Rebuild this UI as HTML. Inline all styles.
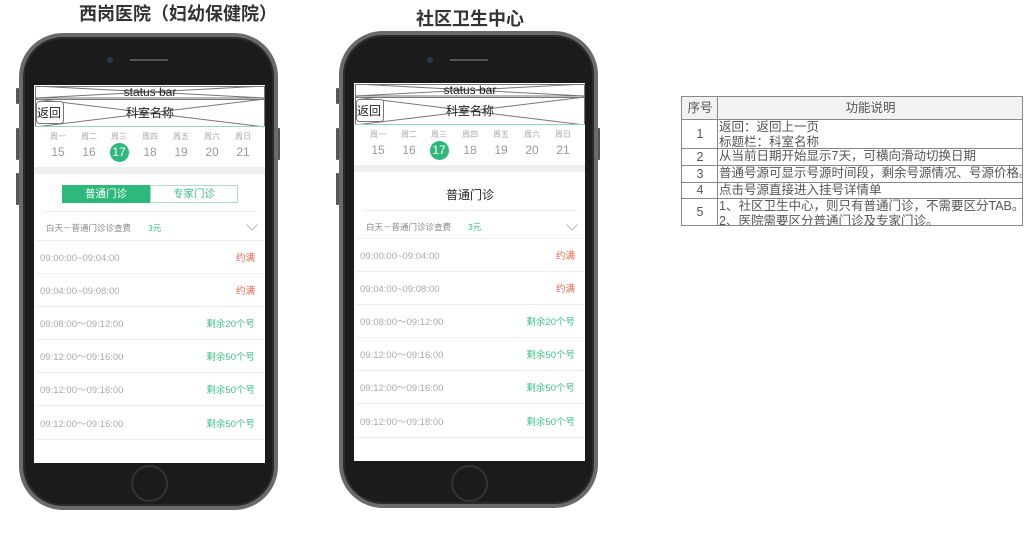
<!DOCTYPE html>
<html><head><meta charset="utf-8"><style>
*{margin:0;padding:0;box-sizing:border-box}
body{width:1035px;height:536px;background:#fff;position:relative;overflow:hidden;font-family:"Liberation Sans","Noto Sans CJK SC",sans-serif}
.a{position:absolute;line-height:1.2}
.ph{position:absolute;width:259px;height:477px}
.body{position:absolute;left:0;top:0;width:259px;height:477px;border-radius:44px;background:#1b1b1b;border:4px solid #6a6a6a;box-shadow:inset 0 0 0 2px #2a2a2a}
.btn{position:absolute;background:#555;width:3px;border-radius:1px}
.scr{position:absolute;left:15px;top:52px;width:231px;height:378px;background:#fff}
.wd{position:absolute;top:99px;font-size:8px;color:#aaa;width:30px;text-align:center;line-height:10px}
.dt{position:absolute;top:112px;font-size:12px;color:#999;width:30px;text-align:center;line-height:15px}
.row{position:absolute;left:21px;width:215px;font-size:9.5px;color:#aaa;line-height:12px;height:12px;margin-top:2px}
.row .r{position:absolute;right:0;top:0;line-height:12px}
.ln{position:absolute;left:16px;width:229px;height:1px;background:#eee}
.red{color:#f0644a}.grn{color:#3cc189}
table{position:absolute;left:681px;top:96px;border-collapse:collapse;font-size:12.5px;color:#555;width:342px;table-layout:fixed}
td{border:1px solid #888;vertical-align:top;line-height:15px;padding:0 0 0 1px;overflow:hidden;white-space:nowrap}
td.n{text-align:center;vertical-align:middle}
</style></head><body>
<div class="a" style="left:0;top:4px;width:356px;text-align:center;font-size:18px;font-weight:bold;color:#333">西岗医院（妇幼保健院）</div>
<div class="a" style="left:340px;top:9px;width:260px;text-align:center;font-size:18px;font-weight:bold;color:#333">社区卫生中心</div>

<!-- phone 1 -->
<div class="ph" style="left:19px;top:33px">
<div class="btn" style="left:-3px;top:55px;height:16px"></div>
<div class="btn" style="left:-3px;top:95px;height:32px"></div>
<div class="btn" style="left:-3px;top:140px;height:32px"></div>
<div class="btn" style="left:258px;top:95px;height:32px"></div>
<div class="body"></div>
<div class="a" style="left:88px;top:24px;width:6px;height:6px;border-radius:3px;background:#2a3550"></div>
<div class="a" style="left:111px;top:26px;width:38px;height:2px;background:#555"></div>
<div class="a" style="left:112px;top:432px;width:37px;height:37px;border-radius:50%;border:2px solid #333"></div>
<div class="scr"></div>
<svg class="a" style="left:16px;top:53px" width="230" height="41"><g fill="none" stroke="#777" stroke-width="1"><rect x="0.5" y="0.5" width="229" height="11.5"/><line x1="0" y1="0" x2="230" y2="12"/><line x1="0" y1="12" x2="230" y2="0"/><rect x="0.5" y="13.5" width="229" height="27"/><line x1="0" y1="13" x2="230" y2="41"/><line x1="0" y1="41" x2="230" y2="13"/><rect x="1.5" y="15.5" width="27" height="22" rx="3" fill="#fff"/></g><line x1="0" y1="40.5" x2="230" y2="40.5" stroke="#8fd6b6"/></svg>
<div class="a" style="left:16px;top:52px;width:230px;text-align:center;font-size:12px;color:#222">status bar</div>
<div class="a" style="left:18px;top:73px;font-size:12px;color:#222">返回</div>
<div class="a" style="left:16px;top:73px;width:230px;text-align:center;font-size:12px;color:#222">科室名称</div>
<div class="wd" style="left:24px">周一</div><div class="wd" style="left:55px">周二</div><div class="wd" style="left:85px">周三</div><div class="wd" style="left:116px">周四</div><div class="wd" style="left:147px">周五</div><div class="wd" style="left:178px">周六</div><div class="wd" style="left:209px">周日</div>
<div class="a" style="left:91px;top:110px;width:19px;height:19px;border-radius:50%;background:#2eb87a"></div>
<div class="dt" style="left:24px">15</div><div class="dt" style="left:55px">16</div><div class="dt" style="left:85px;color:#fff">17</div><div class="dt" style="left:116px">18</div><div class="dt" style="left:147px">19</div><div class="dt" style="left:178px">20</div><div class="dt" style="left:209px">21</div>
<div class="a" style="left:15px;top:134px;width:231px;height:7px;background:#eee"></div>
<div class="a" style="left:43px;top:152px;width:88px;height:18px;background:#2eb87a;color:#fff;font-size:10.5px;text-align:center;line-height:18px">普通门诊</div>
<div class="a" style="left:131px;top:152px;width:88px;height:18px;border:1px solid #a8dec6;color:#3cc189;font-size:10.5px;text-align:center;line-height:16px">专家门诊</div>
<div class="ln" style="left:24px;width:214px;top:178px"></div>
<div class="a" style="left:27px;top:190px;font-size:8.5px;color:#888;line-height:11px">白天－普通门诊诊查费</div>
<div class="a grn" style="left:129px;top:190px;font-size:8.5px;line-height:11px">3元</div>
<svg class="a" style="left:227px;top:191px" width="12" height="7"><path d="M0.5 0.5L6 6L11.5 0.5" fill="none" stroke="#bbb"/></svg>
<div class="ln" style="top:207px"></div>
<div class="row" style="top:218px">09:00:00~09:04:00<span class="r red">约满</span></div>
<div class="ln" style="top:240px"></div>
<div class="row" style="top:251px">09:04:00~09:08:00<span class="r red">约满</span></div>
<div class="ln" style="top:273px"></div>
<div class="row" style="top:284px">09:08:00～09:12:00<span class="r grn">剩余20个号</span></div>
<div class="ln" style="top:306px"></div>
<div class="row" style="top:317px">09:12:00～09:16:00<span class="r grn">剩余50个号</span></div>
<div class="ln" style="top:339px"></div>
<div class="row" style="top:350px">09:12:00～09:16:00<span class="r grn">剩余50个号</span></div>
<div class="ln" style="top:372px"></div>
<div class="row" style="top:384px">09:12:00～09:16:00<span class="r grn">剩余50个号</span></div>
<div class="ln" style="top:406px"></div>
</div>

<!-- phone 2 -->
<div class="ph" style="left:339px;top:31px">
<div class="btn" style="left:-3px;top:57px;height:16px"></div>
<div class="btn" style="left:-3px;top:97px;height:32px"></div>
<div class="btn" style="left:-3px;top:142px;height:32px"></div>
<div class="btn" style="left:258px;top:97px;height:32px"></div>
<div class="body"></div>
<div class="a" style="left:88px;top:26px;width:6px;height:6px;border-radius:3px;background:#2a3550"></div>
<div class="a" style="left:111px;top:28px;width:38px;height:2px;background:#555"></div>
<div class="a" style="left:112px;top:434px;width:37px;height:37px;border-radius:50%;border:2px solid #333"></div>
<div class="scr"></div>
<svg class="a" style="left:16px;top:53px" width="230" height="41"><g fill="none" stroke="#777" stroke-width="1"><rect x="0.5" y="0.5" width="229" height="11.5"/><line x1="0" y1="0" x2="230" y2="12"/><line x1="0" y1="12" x2="230" y2="0"/><rect x="0.5" y="13.5" width="229" height="27"/><line x1="0" y1="13" x2="230" y2="41"/><line x1="0" y1="41" x2="230" y2="13"/><rect x="1.5" y="15.5" width="27" height="22" rx="3" fill="#fff"/></g><line x1="0" y1="40.5" x2="230" y2="40.5" stroke="#8fd6b6"/></svg>
<div class="a" style="left:16px;top:52px;width:230px;text-align:center;font-size:12px;color:#222">status bar</div>
<div class="a" style="left:18px;top:73px;font-size:12px;color:#222">返回</div>
<div class="a" style="left:16px;top:73px;width:230px;text-align:center;font-size:12px;color:#222">科室名称</div>
<div class="wd" style="left:24px">周一</div><div class="wd" style="left:55px">周二</div><div class="wd" style="left:85px">周三</div><div class="wd" style="left:116px">周四</div><div class="wd" style="left:147px">周五</div><div class="wd" style="left:178px">周六</div><div class="wd" style="left:209px">周日</div>
<div class="a" style="left:91px;top:110px;width:19px;height:19px;border-radius:50%;background:#2eb87a"></div>
<div class="dt" style="left:24px">15</div><div class="dt" style="left:55px">16</div><div class="dt" style="left:85px;color:#fff">17</div><div class="dt" style="left:116px">18</div><div class="dt" style="left:147px">19</div><div class="dt" style="left:178px">20</div><div class="dt" style="left:209px">21</div>
<div class="a" style="left:15px;top:134px;width:231px;height:7px;background:#eee"></div>
<div class="a" style="left:16px;top:157px;width:230px;text-align:center;font-size:12px;color:#222">普通门诊</div>
<div class="ln" style="left:24px;width:214px;top:179px"></div>
<div class="a" style="left:27px;top:191px;font-size:8.5px;color:#888;line-height:11px">白天－普通门诊诊查费</div>
<div class="a grn" style="left:129px;top:191px;font-size:8.5px;line-height:11px">3元</div>
<svg class="a" style="left:227px;top:193px" width="12" height="7"><path d="M0.5 0.5L6 6L11.5 0.5" fill="none" stroke="#bbb"/></svg>
<div class="ln" style="top:207px"></div>
<div class="row" style="top:218px">09:00:00~09:04:00<span class="r red">约满</span></div>
<div class="ln" style="top:240px"></div>
<div class="row" style="top:251px">09:04:00~09:08:00<span class="r red">约满</span></div>
<div class="ln" style="top:273px"></div>
<div class="row" style="top:284px">09:08:00～09:12:00<span class="r grn">剩余20个号</span></div>
<div class="ln" style="top:306px"></div>
<div class="row" style="top:317px">09:12:00～09:16:00<span class="r grn">剩余50个号</span></div>
<div class="ln" style="top:339px"></div>
<div class="row" style="top:350px">09:12:00～09:16:00<span class="r grn">剩余50个号</span></div>
<div class="ln" style="top:372px"></div>
<div class="row" style="top:384px">09:12:00～09:18:00<span class="r grn">剩余50个号</span></div>
<div class="ln" style="top:406px"></div>
</div>

<table>
<colgroup><col style="width:36px"><col></colgroup>
<tr style="height:23px;background:#f2f2f2"><td class="n">序号</td><td style="text-align:center;vertical-align:middle">功能说明</td></tr>
<tr style="height:29px"><td class="n">1</td><td><div style="height:28px;overflow:hidden">返回：返回上一页<br>标题栏：科室名称</div></td></tr>
<tr style="height:17px"><td class="n">2</td><td><div style="height:16px;overflow:hidden">从当前日期开始显示7天，可横向滑动切换日期</div></td></tr>
<tr style="height:17px"><td class="n">3</td><td><div style="height:16px;overflow:hidden">普通号源可显示号源时间段，剩余号源情况、号源价格。</div></td></tr>
<tr style="height:16px"><td class="n">4</td><td><div style="height:15px;overflow:hidden">点击号源直接进入挂号详情单</div></td></tr>
<tr style="height:27px"><td class="n">5</td><td><div style="height:26px;overflow:hidden">1、社区卫生中心，则只有普通门诊，不需要区分TAB。<br>2、医院需要区分普通门诊及专家门诊。</div></td></tr>
</table>
</body></html>
